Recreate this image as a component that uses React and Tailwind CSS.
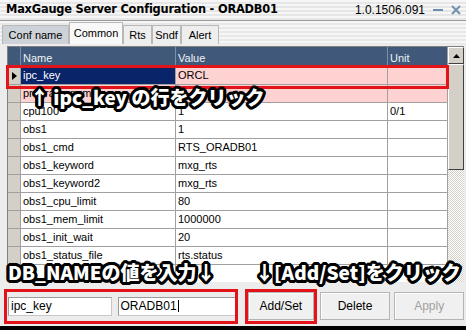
import React from "react";

const ROWS = [
  { name: "ipc_key", value: "ORCL", unit: "", sel: true },
  { name: "program_name", value: "", unit: "", pink: true },
  { name: "cpu100", value: "1", unit: "0/1" },
  { name: "obs1", value: "1", unit: "" },
  { name: "obs1_cmd", value: "RTS_ORADB01", unit: "" },
  { name: "obs1_keyword", value: "mxg_rts", unit: "" },
  { name: "obs1_keyword2", value: "mxg_rts", unit: "" },
  { name: "obs1_cpu_limit", value: "80", unit: "" },
  { name: "obs1_mem_limit", value: "1000000", unit: "" },
  { name: "obs1_init_wait", value: "20", unit: "" },
  { name: "obs1_status_file", value: "rts.status", unit: "" },
  { name: "", value: "", unit: "" },
];

const TABS = [
  { label: "Conf name", cls: "w-[67px] h-[19px] bg-[#cdd2d8]" },
  { label: "Common", cls: "w-[54px] h-[22px] bg-[#f8f8f8]" },
  { label: "Rts", cls: "w-[29px] h-[19px] bg-[#eeeeee]" },
  { label: "Sndf", cls: "w-[29px] h-[19px] bg-[#eeeeee]" },
  { label: "Alert", cls: "w-[38px] h-[19px] bg-[#eeeeee]" },
];

// white caption text with a heavy black outline, like the annotation overlays
const caption =
  "absolute whitespace-nowrap font-['Noto_Sans_CJK_JP','Liberation_Sans',sans-serif] font-black text-[19px] leading-none text-white [text-shadow:2px_0_0_#000,-2px_0_0_#000,0_2px_0_#000,0_-2px_0_#000,2px_2px_0_#000,-2px_-2px_0_#000,2px_-2px_0_#000,-2px_2px_0_#000,3px_0_0_#000,-3px_0_0_#000,0_3px_0_#000,0_-3px_0_#000,3px_1px_0_#000,-3px_1px_0_#000,1px_3px_0_#000,-1px_3px_0_#000,3px_-1px_0_#000,-3px_-1px_0_#000,1px_-3px_0_#000,-1px_-3px_0_#000]";

function GridRow({ row }) {
  const pink = row.sel || row.pink;
  return (
    <div className="flex h-[18px] shrink-0">
      <div className="flex w-[13px] shrink-0 items-center justify-center border-r border-b border-[#a0a0a0] bg-[#d4d0c8]">
        {row.sel && (
          <svg width="5" height="8" viewBox="0 0 5 8">
            <path d="M0 0 L5 4 L0 8 Z" fill="#000" />
          </svg>
        )}
      </div>
      <div
        className={`flex w-[155px] shrink-0 items-center border-r border-b border-[#a0a0a0] pl-[2px] ${
          row.sel ? "bg-[#0a246a] text-white" : pink ? "bg-[#ffd2d2]" : "bg-white"
        }`}
      >
        {row.name}
      </div>
      <div
        className={`flex w-[212px] shrink-0 items-center border-r border-b border-[#a0a0a0] pl-[2px] ${
          pink ? "bg-[#ffd2d2]" : "bg-white"
        }`}
      >
        {row.value}
      </div>
      <div
        className={`flex w-[60px] shrink-0 items-center border-b border-[#a0a0a0] pl-[2px] ${
          pink ? "bg-[#ffd2d2]" : "bg-white"
        }`}
      >
        {row.unit}
      </div>
    </div>
  );
}

function Button({ children, disabled }) {
  return (
    <div
      className={`flex h-[28px] items-center justify-center border border-[#b4b4b4] bg-[#f0f0f0] shadow-[inset_1px_1px_0_#fff] ${
        disabled ? "text-[#a0a0a0]" : "text-black"
      }`}
    >
      {children}
    </div>
  );
}

export default function App() {
  return (
    <div className="relative flex h-[330px] w-[466px] flex-col overflow-hidden bg-[#ececec] font-['Liberation_Sans',sans-serif] text-[11px] text-black">
      {/* Title bar */}
      <div className="flex h-[21px] shrink-0 items-center border-b border-[#9a9a9a] bg-[repeating-linear-gradient(180deg,#f6f6f6_0px,#f6f6f6_2px,#e6e6e6_2px,#e6e6e6_4px)] pl-[6px] pr-[5px]">
        <span className="font-['DejaVu_Sans',sans-serif] text-[11.4px] font-bold tracking-[-0.2px]">
          MaxGauge Server Configuration - ORADB01
        </span>
        <span className="ml-auto text-[12px]">1.0.1506.091</span>
        <span className="ml-[8px] h-[2px] w-[10px] bg-[#6e8eae]" />
        <svg className="ml-[8px]" width="10" height="10" viewBox="0 0 10 10">
          <path d="M1 1 L9 9 M9 1 L1 9" stroke="#6e8eae" strokeWidth="1.8" />
        </svg>
      </div>

      {/* Tabs */}
      <div className="flex h-[23px] shrink-0 items-end bg-[repeating-linear-gradient(180deg,#f6f6f6_0px,#f6f6f6_2px,#e8e8e8_2px,#e8e8e8_4px)] pl-[2px] text-[11px]">
        {TABS.map((t) => (
          <div
            key={t.label}
            className={`flex shrink-0 items-center justify-center border-t border-l border-r border-[#b8b8b8] ${t.cls}`}
          >
            {t.label}
          </div>
        ))}
      </div>

      {/* Grid */}
      <div className="ml-[7px] mr-[2px] mt-[2px] flex h-[236px] shrink-0 border-l border-t border-[#808080]">
        <div className="flex flex-col overflow-hidden">
          <div className="flex h-[20px] shrink-0 bg-[#40597a] text-[#eef2f6]">
            <div className="w-[13px] shrink-0 border-r border-[#7d8fa6]" />
            <div className="flex w-[155px] shrink-0 items-end border-r border-[#7d8fa6] pl-[2px] pb-[1px]">Name</div>
            <div className="flex w-[212px] shrink-0 items-end border-r border-[#7d8fa6] pl-[2px] pb-[1px]">Value</div>
            <div className="flex w-[60px] shrink-0 items-end pl-[2px] pb-[1px]">Unit</div>
          </div>
          {ROWS.map((r, i) => (
            <GridRow key={i} row={r} />
          ))}
        </div>
        {/* Scrollbar */}
        <div className="flex w-[17px] shrink-0 flex-col border-l border-[#a0a0a0] bg-[repeating-conic-gradient(#d4d0c8_0_25%,#ffffff_0_50%)] bg-[length:2px_2px]">
          <div className="flex h-[17px] shrink-0 items-center justify-center border border-t-white border-l-white border-r-[#404040] border-b-[#404040] bg-[#d4d0c8]">
            <svg width="7" height="4" viewBox="0 0 7 4">
              <path d="M3.5 0 L7 4 L0 4 Z" fill="#000" />
            </svg>
          </div>
          <div className="h-[106px] shrink-0 border border-t-white border-l-white border-r-[#404040] border-b-[#404040] bg-[#d4d0c8]" />
        </div>
      </div>

      {/* Bottom edit panel */}
      <div className="flex flex-1 items-center pl-[8px] pr-[2px] pt-[4px]">
        <div className="flex h-[19px] w-[104px] items-center border border-[#c8c8c8] border-t-[#9a9a9a] border-l-[#9a9a9a] bg-white pl-[2px] text-[12px]">
          ipc_key
        </div>
        <div className="ml-[6px] flex h-[19px] w-[120px] items-center border border-[#c8c8c8] border-t-[#9a9a9a] border-l-[#9a9a9a] bg-white pl-[2px] text-[12px]">
          ORADB01<span className="ml-[1px] h-[12px] w-[1px] bg-black" />
        </div>
        <div className="ml-[11px] w-[66px] text-[12px]">
          <Button>Add/Set</Button>
        </div>
        <div className="ml-[6px] w-[71px] text-[12px]">
          <Button>Delete</Button>
        </div>
        <div className="ml-[4px] w-[70px] text-[12px]">
          <Button disabled>Apply</Button>
        </div>
      </div>
      <div className="h-[4px] shrink-0 bg-black" />

      {/* Annotation overlays */}
      <div className="absolute left-[6px] top-[65px] h-[24px] w-[443px] border-[3px] border-[#e2141a]" />
      <div className="absolute left-[4px] top-[289px] h-[35px] w-[234px] border-[3px] border-[#e2141a]" />
      <div className="absolute left-[245px] top-[289px] h-[35px] w-[72px] border-[3px] border-[#e2141a]" />

      <div className={`${caption} left-[30px] top-[87px]`}>↑ ipc_key の行をクリック</div>
      <div className={`${caption} left-[8px] top-[262px]`}>DB_NAMEの値を入力↓</div>
      <div className={`${caption} left-[255px] top-[262px]`}>↓[Add/Set]をクリック</div>
    </div>
  );
}
